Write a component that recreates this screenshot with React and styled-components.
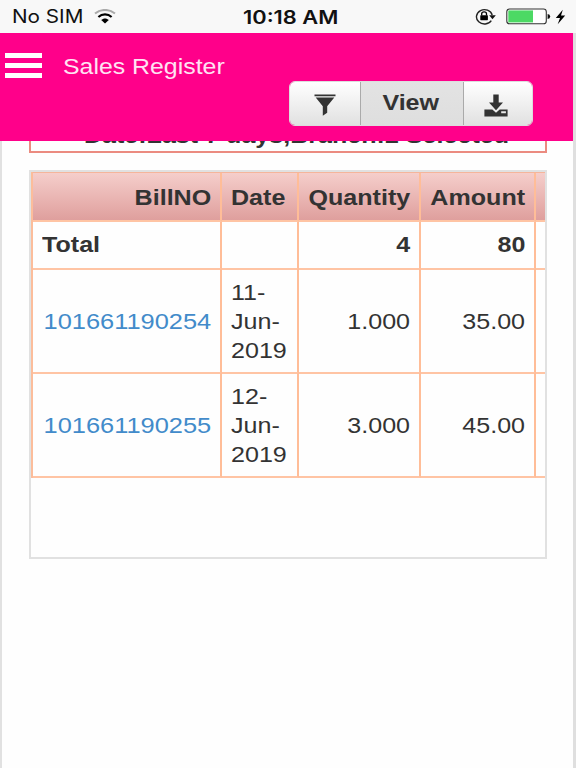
import styled, { createGlobalStyle } from 'styled-components';

const rows = [
  { bill: '101661190254', date: ['11-', 'Jun-', '2019'], qty: '1.000', amount: '35.00' },
  { bill: '101661190255', date: ['12-', 'Jun-', '2019'], qty: '3.000', amount: '45.00' },
];

function App() {
  return (
    <Screen>
      <GlobalStyle />
      <StatusBar>
        <Carrier>
          <StatusText $from="left">No SIM</StatusText>
          <WifiIcon />
        </Carrier>
        <StatusText $bold>10:18 AM</StatusText>
        <Indicators>
          <LockIcon />
          <BatteryIcon />
          <BoltIcon />
        </Indicators>
      </StatusBar>

      <Page>
        <Header>
          <TitleRow>
            <MenuButton aria-label="menu">
              <Bar />
              <Bar />
              <Bar />
            </MenuButton>
            <Title>Sales Register</Title>
          </TitleRow>
          <ButtonGroup>
            <Button aria-label="filter" $width="70px"><FilterIcon /></Button>
            <Button $active $width="103px"><ButtonLabel $bold>View</ButtonLabel></Button>
            <Button aria-label="download" $width="69px"><DownloadIcon /></Button>
          </ButtonGroup>
        </Header>

        <Summary>
          <Wide $bold>Date:Last 7 days,Branch:2 Selected</Wide>
        </Summary>

        <TableBox>
          <Table>
            <HeadCell $right><Wide $bold $from="right">BillNO</Wide></HeadCell>
            <HeadCell><Wide $bold $from="left">Date</Wide></HeadCell>
            <HeadCell $right><Wide $bold $from="right">Quantity</Wide></HeadCell>
            <HeadCell $right><Wide $bold $from="right">Amount</Wide></HeadCell>
            <HeadCell $last />

            <TotalCell><Wide $bold $from="left">Total</Wide></TotalCell>
            <TotalCell />
            <TotalCell $right><Wide $bold $from="right">4</Wide></TotalCell>
            <TotalCell $right><Wide $bold $from="right">80</Wide></TotalCell>
            <TotalCell $last />

            {rows.map((row) => (
              <Row key={row.bill}>
                <Cell $right><BillLink $from="right">{row.bill}</BillLink></Cell>
                <Cell>
                  <Wide $from="left">
                    {row.date.map((part) => <DateLine key={part}>{part}</DateLine>)}
                  </Wide>
                </Cell>
                <Cell $right><Wide $from="right">{row.qty}</Wide></Cell>
                <Cell $right><Wide $from="right">{row.amount}</Wide></Cell>
                <Cell $last />
              </Row>
            ))}
          </Table>
        </TableBox>
      </Page>
    </Screen>
  );
}

const WifiIcon = () => (
  <svg width="22" height="15" viewBox="0 0 22 15" fill="none">
    <path d="M1 4.6C6.6-.3 15.400-.3 21 4.600" stroke="#aaa" strokeWidth="2" />
    <path d="M4.400 8C8.200 4.600 13.800 4.600 17.600 8" stroke="#000" strokeWidth="2.200" />
    <path d="M7.200 11C9.400 8.900 12.600 8.900 14.800 11L11 14.500Z" fill="#000" />
  </svg>
);

const LockIcon = () => (
  <svg width="21" height="17" viewBox="0 0 21 17" fill="none">
    <path d="M16.300 12.600A8 7.200 0 1 1 17.200 7" stroke="#222" strokeWidth="1.400" />
    <path d="M14.200 7.300H20.800L17.500 11.200Z" fill="#111" />
    <rect x="5.300" y="7.200" width="7.600" height="5" rx=".6" fill="#000" />
    <path d="M6.700 7.500V5.800a2.400 2 0 0 1 4.800 0v1.700" stroke="#000" strokeWidth="1.300" />
  </svg>
);

const BatteryIcon = () => (
  <svg width="45" height="17" viewBox="0 0 45 17">
    <rect x=".8" y="1" width="39.500" height="14.800" rx="2.800" fill="#fff" stroke="#333" strokeWidth="1.100" />
    <path d="M2.300 2.400H27V14.400H2.300Z" fill="#4cd964" />
    <path d="M41.600 5.900Q44.200 6.200 44.200 8.400T41.600 10.900Z" fill="#111" />
  </svg>
);

const BoltIcon = () => (
  <svg width="11" height="16" viewBox="0 0 11 16">
    <path d="M7.800.8L.8 9H5L2.700 15.200L10.200 6.600H6Z" fill="#000" />
  </svg>
);

const FilterIcon = () => (
  <svg width="22" height="22" viewBox="0 0 22 22" fill="#333">
    <path d="M.5.400H21.500V2.200H.5ZM1.700 3.600H20.300L13.200 12.300V18.800L8.800 21.800V12.300Z" />
  </svg>
);

const DownloadIcon = () => (
  <svg width="24" height="23" viewBox="0 0 24 23" fill="#333">
    <path d="M9.300.4H14.700V8.500H19L12 16.200L5 8.500H9.300Z" />
    <path fillRule="evenodd" d="M.4 15.600H8.300L12 18.800L15.700 15.600H23.600V22.600H.4ZM17.200 17.300V19.200H21.900V17.300Z" />
  </svg>
);

const GlobalStyle = createGlobalStyle`
  body {
    margin: 0;
    background: #fff;
    overflow: hidden;
  }

  * {
    box-sizing: border-box;
  }
`;

const Screen = styled.div`
  width: 576px;
  height: 768px;
  overflow: hidden;
  display: flex;
  flex-direction: column;
  background: #fefefe;
  color: #333;
  font-family: "Liberation Sans", Arial, sans-serif;
  font-size: 22px;
`;

/* type is set wider than the font's natural proportions */
const Wide = styled.span`
  display: inline-block;
  font-weight: ${({ $bold }) => ($bold ? 700 : 400)};
  line-height: 28.7px;
  white-space: nowrap;
  transform: scaleX(1.14);
  transform-origin: ${({ $from }) => $from || 'center'} center;
`;

const StatusBar = styled.div`
  flex: none;
  height: 33px;
  padding: 0 10px 0 12px;
  display: grid;
  grid-template-columns: 1fr auto 1fr;
  align-items: center;
  background: #f8f8f8;
`;

const StatusText = styled(Wide)`
  padding-top: 2px;
  padding-left: ${({ $bold }) => ($bold ? '3px' : 0)};
  font-family: Inter, sans-serif;
  font-size: ${({ $bold }) => ($bold ? '18.5px' : '18px')};
  font-weight: ${({ $bold }) => ($bold ? 600 : 400)};
  color: #111;
  transform: scaleX(${({ $bold }) => ($bold ? 1.18 : 1.15)});
`;

const Carrier = styled.div`
  display: flex;
  align-items: center;
  gap: 20px;
`;

const Indicators = styled.div`
  display: flex;
  align-items: center;
  justify-content: flex-end;
  gap: 10px;

  svg:last-child {
    margin-left: -6px;
  }
`;

const Page = styled.div`
  flex: 1;
  min-height: 0;
  border-left: 2px solid #e1e1e1;
  border-right: 3px solid #dfdfdf;
`;

const Header = styled.header`
  position: relative;
  z-index: 1;
  height: 108px;
  margin-left: -2px;
  padding: 17px 40px 0 5px;
  background: #ff008a;
`;

const TitleRow = styled.div`
  display: flex;
  align-items: center;
  gap: 21px;
  height: 31px;
`;

const MenuButton = styled.button`
  width: 37px;
  padding: 0;
  border: none;
  background: none;
  display: flex;
  flex-direction: column;
  gap: 5px;
`;

const Bar = styled.span`
  height: 5px;
  width: 100%;
  background: #fff;
`;

const Title = styled(Wide)`
  padding-top: 3px;
  color: #ffe3f3;
  transform: scaleX(1.13);
  transform-origin: left center;
`;

const ButtonGroup = styled.div`
  width: fit-content;
  margin-left: auto;
  display: flex;
  border-radius: 6px;
  overflow: hidden;
  border: 1px solid #ddd;
`;

const Button = styled.button`
  width: ${({ $width }) => $width};
  height: 43px;
  padding: 3px 0 0;
  border: none;
  display: flex;
  align-items: center;
  justify-content: center;
  font: inherit;
  color: #333;
  background: ${({ $active }) => ($active ? 'linear-gradient(#e3e3e3, #dedede)' : 'linear-gradient(#fff, #e1e1e1)')};

  & + & {
    border-left: 1px solid #aaa;
  }

  &:last-child {
    padding: 4px 4px 0 0;
  }
`;

const ButtonLabel = styled(Wide)`
  padding: 0 2px 3px 0;
`;

const Summary = styled.div`
  width: 518px;
  height: 42px;
  margin: -30px 0 0 27px;
  display: flex;
  align-items: flex-end;
  justify-content: center;
  padding-left: 16px;
  border: 2px solid #eb8b80;
`;

const TableBox = styled.div`
  width: 518px;
  height: 389px;
  margin: 17px 0 0 27px;
  border: 2px solid #e1e1e1;
  overflow: hidden;
`;

const Table = styled.div`
  display: grid;
  grid-template-columns: 189px 77px 122px 115px 30px;
  grid-template-rows: 50px 47px 104px 104px;
  margin-top: -1px;
  border-left: 2px solid #fcbd9b;
  border-top: 2px solid #f5b59b;
`;

const Row = styled.div`
  display: contents;
`;

const Cell = styled.div`
  display: flex;
  align-items: center;
  justify-content: ${({ $right }) => ($right ? 'flex-end' : 'flex-start')};
  padding: 4px 9px 0;
  border-right: ${({ $last }) => ($last ? 'none' : '2px solid #ffbd98')};
  border-bottom: 2px solid #ffc4a4;
  margin-top: -1px;
`;

const HeadCell = styled(Cell)`
  margin-top: 0;
  margin-bottom: 1px;
  padding-top: 3px;
  background: linear-gradient(#f5cecb, #df9f9d) padding-box;
`;

const TotalCell = styled(Cell)`
  padding-top: 1px;
`;

const BillLink = styled(Wide).attrs({ as: 'a' })`
  color: #428bca;
  transform: scaleX(1.155);
`;

const DateLine = styled.span`
  display: block;
`;

export default App;
